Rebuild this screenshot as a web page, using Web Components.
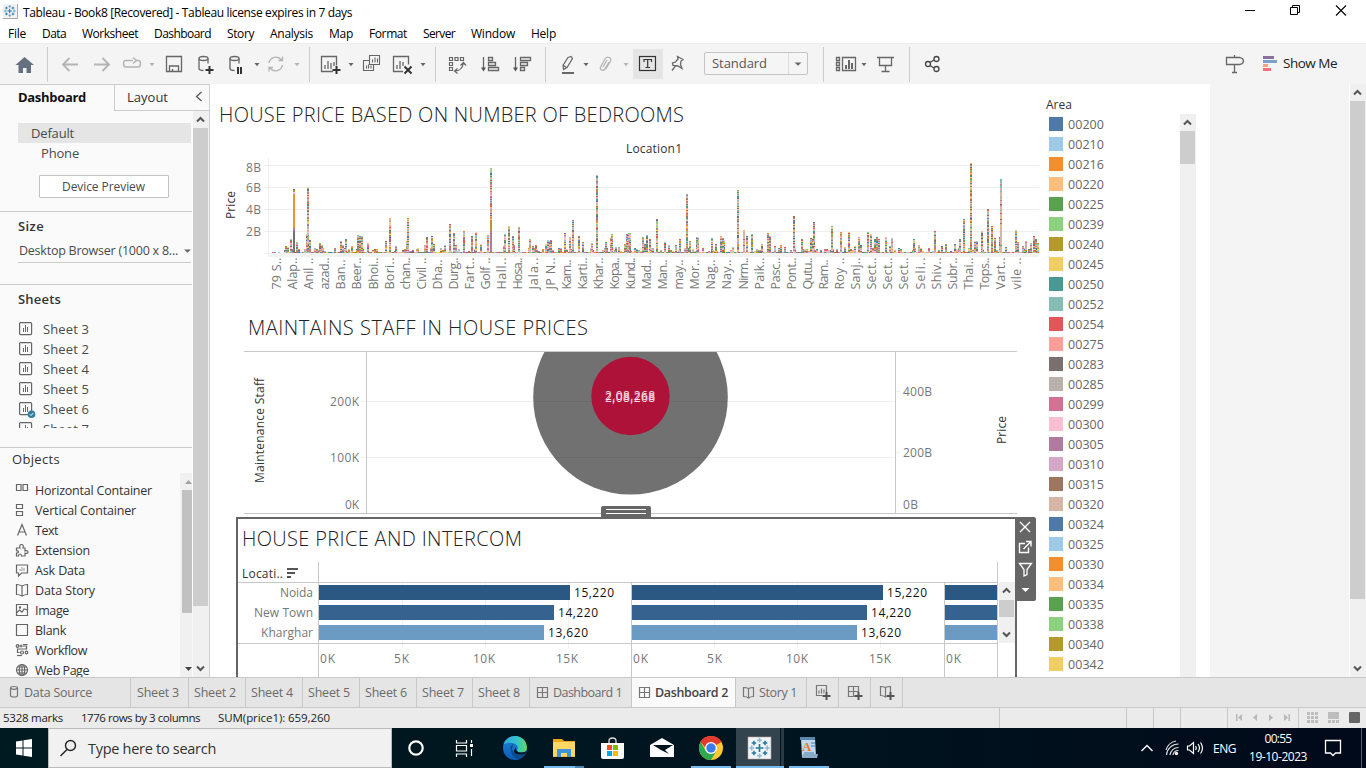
<!DOCTYPE html>
<html lang="en">
<head>
<meta charset="utf-8">
<title>Tableau - Book8</title>
<style>
body{margin:0;width:1366px;height:768px;overflow:hidden;display:flex;flex-direction:column;background:#fff;font-family:"Open Sans","Noto Sans",sans-serif;font-size:12px;color:#333}
</style>
</head>
<body>
<title-bar></title-bar>
<menu-bar></menu-bar>
<tool-bar></tool-bar>
<work-area></work-area>
<sheet-tabs></sheet-tabs>
<status-bar></status-bar>
<task-bar></task-bar>
<script>
const PALETTE=['#4e79a7','#a0cbe8','#f28e2b','#ffbe7d','#59a14f','#8cd17d','#b6992d','#f1ce63','#499894','#86bcb6','#e15759','#ff9d9a','#79706e','#bab0ac','#d37295','#fabfd2','#b07aa1','#d4a6c8','#9d7660','#d7b5a6'];
const define=(name,css,html,after)=>customElements.define(name,class extends HTMLElement{
  connectedCallback(){
    if(this.shadowRoot)return;
    const root=this.attachShadow({mode:'open'});
    root.innerHTML='<style>*,:host{box-sizing:border-box}'+css+'</style>'+(typeof html==='function'?html(this):html);
    if(after)after(this,root);
  }
});

/* Text run whose tracking is tuned to fill a given width. */
const pen=document.createElement('canvas').getContext('2d');
define('fit-text',':host{display:inline-block;white-space:pre;flex:none}','<slot></slot>',el=>{
  const w=+el.getAttribute('w'),s=getComputedStyle(el);
  if(!w)return;
  pen.font=`${s.fontWeight} ${s.fontSize} ${s.fontFamily}`;
  const t=el.textContent;
  el.style.letterSpacing=((w-pen.measureText(t).width)/t.length).toFixed(3)+'px';
  el.style.width=w+'px';
});
const fit=(t,w,c='')=>`<fit-text w="${w}" class="${c}">${t}</fit-text>`;

/* svg whose user space starts at x,y */
const box=(x,y,w,h,body,extra='')=>`<svg width="${w}" height="${h}" viewBox="${x} ${y} ${w} ${h}" ${extra}>${body}</svg>`;

/* Places items left to right; each item is [left, width, markup]. */
const track=(start,items)=>{let at=start;return items.map(([x,w,m])=>{const g=x-at;at=x+w;return `<span style="margin-left:${g}px;width:${w}px">${m}</span>`}).join('')};
const TRACKCSS='span{display:flex;flex:none;align-items:center;white-space:nowrap;height:100%}svg{display:block;flex:none}';

const snow=(x,y,k=1,c='#1c6f9e',d='#5fa3c7')=>{
  const plus=(a,b,r,w,col)=>`<path d="M${a-r} ${b}H${a+r}M${a} ${b-r}V${b+r}" stroke="${col}" stroke-width="${w}"/>`;
  return `<g transform="translate(${x} ${y}) scale(${k})" fill="none">`+plus(0,0,2.6,1.1,c)+plus(0,-5.2,1.6,1,d)+plus(0,5.2,1.6,1,d)+plus(-5.2,0,1.6,1,d)+plus(5.2,0,1.6,1,d)+plus(-3.7,-3.4,1.5,1,c)+plus(3.7,-3.4,1.5,1,c)+plus(-3.7,3.4,1.5,1,c)+plus(3.7,3.4,1.5,1,c)+'</g>';
};

define('title-bar',':host{display:flex;height:24px;flex:none;color:#000;background:#fff}'+TRACKCSS,
 track(0,[
  [3,15,box(3,0,15,24,'<rect x="3" y="4" width="14" height="14" fill="#f2f2f2"/><path d="M3 18.5H17.5V4" stroke="#aaa" fill="none"/>'+snow(9.7,11,.88))],
  [23,330,fit('Tableau - Book8 [Recovered] - Tableau license expires in 7 days',329)],
  [1244,14,box(1244,0,14,24,'<path d="M1245 10.5h10" stroke="#000"/>')],
  [1288,14,box(1288,0,14,24,'<path d="M1290.5 7.500h7v7h-7zM1292.500 7.500v-2h7v7h-2" fill="none" stroke="#000"/>')],
  [1334,14,box(1334,0,14,24,'<path d="M1336 5.500l10 10m0-10l-10 10" fill="none" stroke="#000" stroke-width="1.100"/>')]
 ]));

define('menu-bar',':host{display:flex;height:19px;flex:none;color:#000;background:#fff}'+TRACKCSS,
 track(0,[['File',8,18],['Data',42,24],['Worksheet',82,56],['Dashboard',154,57],['Story',227,27],['Analysis',270,43],['Map',329,24],['Format',369,38],['Server',423,32],['Window',471,44],['Help',531,25]].map(([t,x,w])=>[x,w,fit(t,w)])));

const caret=(x,y=64,c='#666',r=2.500)=>`<path d="M${x-r} ${y-1.500}h${r*2}l-${r} 3.200z" fill="${c}"/>`;
const G='#666',L='#b4b4b4';
const ic=(x,w,body,c=G)=>[x,w,box(x,43,w,41,`<g fill="none" stroke="${c}" stroke-width="1.300">${body}</g>`)];
const sep=x=>ic(x,1,`<path d="M${x+.5} 47V82" stroke="#ccc"/>`);
const car=(x,c)=>ic(x-4,8,`<g stroke="none">${caret(x,64.500,c)}</g>`);
define('tool-bar',':host{display:flex;height:41px;flex:none;background:#f4f4f4;box-shadow:inset 0 1px #eee}fit-text.std{font-size:13px;color:#555}.sel{display:flex;align-items:center;width:104px;height:23px;border:1px solid #c4c4c4;border-radius:2px;padding-left:7px;background:#f5f5f5;margin-top:-1px}.sel i{width:19px;height:21px;border-left:1px solid #ddd;margin-left:auto;display:flex}.show{font-size:13.500px;color:#222;margin-top:-1px}.t{width:30px;height:30px;background:#e5e5e5;display:flex}'+TRACKCSS,
 track(0,[
  ic(14,21,'<path d="M24.500 57l-9 8h3v8h4.500v-5h3.500v5h4.500v-8h3z" fill="#637080" stroke="none"/>'),
  sep(47),
  ic(61,18,'<path d="M78 64.500H63M69.500 58l-6.500 6.500 6.500 6.500" stroke-width="1.800"/>',L),
  ic(93,18,'<path d="M94 64.500h15M102.500 58l6.500 6.500-6.500 6.500" stroke-width="1.800"/>',L),
  ic(122,21,'<path d="M133 60.500h-7q-2.500 0-2.500 3.200t2.500 3.200h12q2.500 0 2.500-3.200t-2.500-3.200h-3M133 57.500l3.500 3-3.500 3" stroke-width="1.500"/>',L),
  car(152,L),
  ic(165,18,'<path d="M166.500 56.500h15v15h-15zM169.500 71v-5h9v5M172.500 71v-2"/>'),
  ic(197,21,'<ellipse cx="203.500" cy="58.500" rx="4.500" ry="2"/><path d="M199 58.500v10q0 2 4.500 2M208 58.500v5"/><path d="M209.500 66v8M205.500 70h8" stroke="#333" stroke-width="2"/>'),
  ic(228,17,'<ellipse cx="234.500" cy="58.500" rx="4.500" ry="2"/><path d="M230 58.500v10q0 2 4.500 2M239 58.500v5"/><path d="M238 67v7M241 67v7" stroke="#333" stroke-width="2"/>'),
  car(257),
  ic(266,20,'<path d="M269 63a7 7 0 0 1 12.500-3M282.500 65a7 7 0 0 1-12.500 3M278.500 60.500h4v-4M273 67.500h-4v4" stroke-width="1.400"/>',L),
  car(297,L),sep(309),
  ic(320,21,'<path d="M333 71.500h-11.500v-15h15v9M325 69v-4M328 69v-8M331 69v-6M334 66v-4"/><path d="M336.500 66v8M332.500 70h8" stroke="#333" stroke-width="2"/>'),
  car(351),
  ic(362,19,'<path d="M369.500 55.500h10v9h-10zM369 60.500h-5.500v10h10v-6M372.500 62.500v-3M375 62.500v-5M377.500 62.500v-4M366.500 68.500v-3M368.500 68.500v-4M371 68.500v-3" stroke-width="1.100"/>'),
  ic(392,21,'<path d="M403 71.500h-9.500v-15h15v8M397 69v-4M400 69v-8M403 66v-4"/><path d="M404.500 66.500l7 7m0-7l-7 7" stroke="#333" stroke-width="2"/>'),
  car(423),sep(435),
  ic(448,20,'<path d="M449.500 57.500h3v3h-3zM455 57.500h3v3h-3zM460.500 57.500h3v3h-3zM449.500 62.500h3v3h-3zM449.500 67.500h3v3h-3zM455 71q7 0 8.500-8M460.500 65.500l3-3 2.500 3M457.500 68.500l-3 2.500 3 2.500" stroke-width="1.200"/>'),
  ic(480,20,'<path d="M483.500 57v12M488.500 57.500h4v3h-4zM488.500 62.500h7v3h-7zM488.500 67.500h10v3h-10z"/><path d="M481 67.500h5l-2.500 4z" fill="#555" stroke="none"/>'),
  ic(512,20,'<path d="M515.500 57v12M520.500 57.500h10v3h-10zM520.500 62.500h7v3h-7zM520.500 67.500h4v3h-4z"/><path d="M513 67.500h5l-2.500 4z" fill="#555" stroke="none"/>'),
  sep(545),
  ic(560,16,'<path d="M568 57.500l3-1 1.500 2-5.500 9-3.500 2-.5-4zM563.500 65.500l3 2" stroke-width="1.200"/><path d="M562 73h12" stroke-width="2"/>'),
  car(586),
  ic(598,15,'<path d="M609 62l-4 7q-1.500 2-3.500 1-2-1.500-.7-3.500l4.500-8q1.500-2.200 4-1 2.500 1.500 1 4l-4.500 7.500M607 60l-4 7" stroke-width="1.300"/>',L),
  car(626,L),
  [633,30,'<div class="t">'+box(633,49,30,30,'<rect x="639.500" y="56.500" width="16" height="14" fill="none" stroke="#333" stroke-width="1.200"/><path d="M644 62v-2.500h7.500v2.500M647.700 60v7.500M645.500 67.500h4.500" fill="none" stroke="#333" stroke-width="1.200"/>')+'</div>'],
  ic(669,17,'<path d="M677.500 56.500l5.500 3-2 1.500-.5 3.500 1.500 4-4-2.500-5-.5-.5-2.500 3-1 2.500-3zM675.500 66l-3.500 4.500" stroke-width="1.300"/>'),
  [704,104,`<div class="sel">${fit('Standard',55,'std')}<i>${box(789,53,18,21,caret(798,64,G,3.500))}</i></div>`],
  sep(823),
  ic(835,23,'<path d="M842.500 57.500h13v13h-13zM836.500 57.500h3v3h-3zM836.500 62.500h3v3h-3zM836.500 67.500h3v3h-3z"/><path d="M846 69v-4M849 69v-9M852 69v-6" stroke-width="2"/>'),
  car(864),
  ic(876,19,'<path d="M877 57.500h17M879.500 58v7.500h12v-7.500M885.500 66v5M881.500 71.500h8"/>'),
  sep(909),
  ic(924,17,'<circle cx="928" cy="64" r="2.500"/><circle cx="936.500" cy="59" r="2.500"/><circle cx="936.500" cy="69" r="2.500"/><path d="M930 62.500l4-2.500M930 65.500l4 2.500"/>','#444'),
  ic(1225,20,'<path d="M1226.500 57.500h13.500q3.500 1 3.500 3.500t-3.500 3.500h-13.500zM1234.500 55v2.500M1234.500 64.500v7.500M1232 72.500h5"/>'),
  [1263,74,box(1263,43,20,41,'<path fill="#8b6f9c" d="M1263 56h11v3h-11z"/><path fill="#7aa0cc" d="M1263 60h14v3h-14z"/><path fill="#f2a57c" d="M1263 64h5v3h-5z"/><path fill="#f3707c" d="M1263 68h8v3h-8z"/>')+fit('Show Me',54,'show')]
 ]));

/* d: 1 points up, -1 points down */
const chev=(x,y,d)=>`<path d="M${x-3.500} ${y+d*2}L${x} ${y-d*1.500}L${x+3.500} ${y+d*2}" fill="none" stroke="#555" stroke-width="2"/>`;
/* vertical scrollbar: y,h = extent, a,b = thumb extent */
const scroll=(x,y,w,h,a,b,up=true,down=true)=>box(x,y,w,h,`<rect x="${x}" y="${y}" width="${w}" height="${h}" fill="#f0f0f0"/><rect x="${x}" y="${a}" width="${w-1}" height="${b-a}" fill="#cdcdcd"/>`+(up?chev(x+w/2-.5,y+8.500,1):'')+(down?chev(x+w/2-.5,y+h-8.500,-1):''),'style="display:block;flex:none"');

const sheetIco=(chk)=>box(19,322,18,16,`<g fill="none" stroke="#666" stroke-width="1.200"><rect x="19.600" y="322.600" width="12" height="12" rx="1"/><path d="M23.500 332v-4M25.500 332v-7M27.500 332v-5" stroke-width="1"/></g>`+(chk?'<circle cx="31.500" cy="334.200" r="3.800" fill="#2e7da1"/><path d="M29.800 334.200l1.300 1.300 2.200-2.500" fill="none" stroke="#fff"/>':''));
const O=(b)=>box(0,0,14,14,`<g fill="none" stroke="#666" stroke-width="1.200">${b}</g>`);
const objects=[
 ['Horizontal Container',117,O('<path d="M1.500 1.500h4.500v6h-4.500zM8 1.500h4.500v6h-4.500z"/>')],
 ['Vertical Container',101,O('<path d="M1.500 1.500h6v4h-6zM1.500 8.500h6v4h-6z"/>')],
 ['Text',23,O('<path d="M2.500 12.500l4.500-11 4.500 11M4 9h6"/>')],
 ['Extension',55,O('<path d="M1.500 5h3.500q-1-3.500 1.500-3.500t1.500 3.500h2v3q3-1 3 1t-3 1.200v2.800h-3.500q0-2-1.500-2t-1.500 2h-2v-3q2 0 2-1.200t-2-1.200z"/>')],
 ['Ask Data',50,O('<path d="M1.500 2h11v8h-6l-3 3v-3h-2z"/><path d="M5 8v-2M7 8v-4M9 8v-3" stroke="#aaa"/>')],
 ['Data Story',60,O('<path d="M7 3q-2.500-1.500-5.500-1.500v10q3 0 5.500 1.500 2.500-1.500 5.500-1.500v-10q-3 0-5.500 1.500zM7 3v10"/>')],
 ['Image',34,O('<path d="M1.500 1.500h11v11h-11zM1.500 10l3-3 2.500 2 2-3 3.500 1"/><circle cx="5" cy="4.500" r=".6"/>')],
 ['Blank',31,O('<path d="M1.500 1.500h11v11h-11z"/>')],
 ['Workflow',52,O('<circle cx="2.500" cy="3" r="1.300"/><path d="M4 3h7.500v3h-9v3.500h2M6 1.500v3M8 1.500h4.500"/><circle cx="7" cy="9.500" r="1.500"/><circle cx="11.500" cy="9.500" r="1.300"/><path d="M2 12.500h5"/>')],
 ['Web Page',54,O('<circle cx="7" cy="7" r="5.500"/><ellipse cx="7" cy="7" rx="2.700" ry="5.500"/><path d="M1.500 7h11M2.500 4h9M2.500 10h9M7 1.500v11"/>')]
];
define('side-panel',`:host{display:flex;flex-direction:column;width:210px;height:593px;background:#fafafa;border-right:1px solid #d0d0d0;border-top:1px solid #ccc;flex:none;color:#4a4a4a}
svg{display:block;flex:none}
.tabs{display:flex;height:26px;flex:none;font-size:13px;line-height:25px}
.tabs b{width:114px;padding-left:18px;color:#111}
.tabs div{flex:1;border-left:1px solid #ccc;border-bottom:1px solid #ccc;display:flex;padding-left:12px;color:#333}
.body{display:flex;flex:1;min-height:0}
.col{width:192px;overflow:hidden;margin-right:1px;flex:none}
.row{height:20px;line-height:20px;font-size:13px}
.def{margin:12px 1px 0 18px;padding-left:13px;background:#e5e5e5}.ph{padding-left:41px}
.btn{margin:12px 0 0 39px;width:130px;height:23px;line-height:21px;border:1px solid #c4c4c4;padding-left:22px;border-radius:1px;background:#fff}
.line{height:1px;background:#ccc}
h4{margin:0;font-size:13px;line-height:20px;font-weight:600;color:#333}
.desk{display:flex;margin:5px 1px 0 18px;height:22px;line-height:20px;border-bottom:1px solid #ccc;padding-left:1px;font-size:12.500px}
.sheets{height:109px;overflow:hidden}
.sheets .row{display:flex;padding:0 0 0 19px}.sheets svg{margin:3px 6px 0 0}
.objs{display:flex;height:204px;overflow:hidden}
.objs>div{width:180px;padding-top:7px;flex:none}.objs .row{display:flex;font-size:12.500px;line-height:21px;color:#333;padding-left:15px}.objs .row svg{margin:3px 6px 0 0}`,
`<div class="tabs"><b>${fit('Dashboard',68)}</b><div>${fit('Layout',41)}${box(180,85,28,25,'<path d="M201.500 92l-5 4.500 5 4.500" stroke="#555" fill="none" stroke-width="1.300"/>','style="margin-left:12px"')}</div></div>
<div class="body"><div class="col">
<div class="row def">${fit('Default',43)}</div><div class="row ph">${fit('Phone',38)}</div>
<div class="btn">${fit('Device Preview',83)}</div>
<div class="line" style="margin-top:13px"></div>
<h4 style="margin:4px 0 0 18px">${fit('Size',26)}</h4>
<div class="desk">${fit('Desktop Browser (1000 x 8...',159)}${box(178,241,14,20,caret(187.500,251,G,3.500))}</div>
<div class="line" style="margin-top:21px"></div>
<h4 style="margin:4px 0 10px 18px">${fit('Sheets',43)}</h4>
<div class="sheets">${[3,2,4,5,6,7].map(n=>`<div class="row">${sheetIco(n===6)}${fit('Sheet '+n,46)}</div>`).join('')}</div>
<div class="line" style="margin-top:19px"></div>
<h4 style="margin:1px 0 4px 12px;font-weight:500">${fit('Objects',48)}</h4>
<div class="objs"><div>${objects.map(([t,w,i])=>`<div class="row">${i}${fit(t,w)}</div>`).join('')}</div>
${box(180,473,12,204,'<rect x="180" y="473" width="12" height="204" fill="#f0f0f0"/><rect x="182" y="490" width="10" height="123" fill="#c1c1c1"/><path d="M185 484h7l-3.500-4z" fill="#a3a3a3"/><path d="M185 667h7l-3.500 4z" fill="#444"/>')}</div>
</div>${scroll(193,111,16,566,128,606)}</div>`);

/* Price per location: [left, top] of the taller stacks */
const stacks=[];
const A=[225,289,231,291,240,267,249,117,258,276,288,252,291,111,297,270,327,279,333,285,390,273,396,285,405,267,423,289,441,255,447,258,453,258,471,279,525,273,537,204,555,288,588,273,591,204,621,294,642,285,648,261,663,258,669,283,702,285,717,222,729,249,735,285,759,243,783,258,795,246,810,282,831,255,840,54,882,252,879,288,894,228,906,258,909,285,924,231,957,267,966,288,975,285,1005,282,1011,270,1017,273,1020,270,1062,249,1077,261,1086,210,1104,258,1116,276,1143,279,1158,75,1185,276,1200,264,1203,252,1215,291,1224,291,1245,282,1251,252,1257,249];
const B=[12,282,18,252,24,249,66,261,72,282,78,255,87,267,108,207,132,276,144,285,165,285,177,267,198,132,207,273,228,261,231,264,273,264,285,282,300,258,306,264,309,270,336,291,351,120,369,240,378,258,393,252,423,282,441,249,447,258,462,288,480,285,492,291,519,198,543,267,570,264,576,264,579,216,633,228,660,246,672,291,684,246,702,288,714,261,720,285,741,246,750,252,762,267,768,261,774,267,795,261,807,288,813,264,840,297,879,267,894,285,942,243,963,288,975,282,1002,282,1017,267,1029,207,1050,39,1062,273,1068,273,1083,243,1101,177,1113,228,1122,264,1137,261,1140,87,1155,291,1185,240,1191,276,1206,288,1215,273,1230,279,1239,258,1245,267,1251,279];
for(let i=0;i<A.length;i+=2)stacks.push([210+A[i]/3,150+A[i+1]/3]);
for(let i=0;i<B.length;i+=2)stacks.push([620+B[i]/3,150+B[i+1]/3]);
let seed=77;const rnd=()=>(seed=(seed*1103515245+12345)%2147483648)/2147483648;
const stackSvg=()=>{
  const paths=PALETTE.map(()=>'');
  const put=(c,x,y,h,w=2)=>paths[c]+=`M${x} ${y}h${w}v${h}h-${w}z`;
  for(let x=270;x<1037;x+=2){
    const h=x<284?(rnd()>.6?1:0):(rnd()>.6?2+Math.floor(rnd()*4):1);
    for(let y=0;y<h;y++)put(Math.floor(rnd()*20),x,252-y,1);
  }
  for(const [a,b] of stacks){
    const x=Math.round(a),t=Math.round(b);
    if(t===189){put(12,x,231,22);put(16,x,228,3);put(2,x,194,34);put(15,x,192,2);put(6,x,190,2);put(12,x,189,1);continue}
    const solid=x===743?19:x===1000?19:-1;
    for(let y=252;y>=t;y--){
      let c=Math.floor(rnd()*20);
      if(solid>=0&&rnd()<.8)c=(y<200&&rnd()<.5)?9:solid;
      if(x===490&&y>219)c=y>230?16:6;
      put(c,x,y,1);
    }
  }
  return paths.map((d,i)=>`<path d="${d}" fill="${PALETTE[i]}" shape-rendering="crispEdges"/>`).join('');
};
const tx=(t,x,y,w,o='')=>`<text x="${x}" y="${y}" textLength="${w}" ${o}>${t}</text>`;
const vt=(t,x,y,w,o='')=>`<text transform="translate(${x} ${y}) rotate(-90)" ${w?`textLength="${w}"`:''} ${o}>${t}</text>`;
const locs='79 S,Alap,Anil ,azad,Ban,Beer,Bhoi,Bori,chan,Civil ,Dha,Durg,Fart,Golf ,Hall,Hosa,Jala,JP N,Kam,Karti,Khar,Kopa,Kund,Mad,Man,may,Mor,Nag,Nay,Nirm,Paik,Pasc,Pont,Qutu,Ram,Roy ,Sanj,Sect,Sect,Sect,Seli,Shiv,Subr,Thai,Tops,Vart,vile '.split(',');
const CH='svg{display:block}text{font-size:12px;fill:#777}.h{font-size:20px;fill:#222;font-weight:300}.k{fill:#333;font-weight:500}.r{font-size:12.500px}';
define('price-chart',':host{display:block;height:222px}'+CH,()=>box(210,84,830,222,
 tx('HOUSE PRICE BASED ON NUMBER OF BEDROOMS',219,121.5,465,'class="h"')+tx('Location1',626,153,56,'class="k"')+
 [[8,165,172],[6,187,192],[4,209,214],[2,231,236]].map(([n,y,b])=>`<path d="M264 ${y+.5}H1039" stroke="#eee"/>`+tx(n+'B',246,b,15)).join('')+
 '<path d="M268.500 158V256M264 253.500h4" stroke="#eee"/><path d="M268 253h771v4H268z" fill="#f3f3f3"/>'+stackSvg()+
 vt('Price',235,219,28,'class="k"')+
 locs.map((t,i)=>vt(t+'..',(281+i*16.087).toFixed(1),289.500,t.length<4?30:32,'class="r"')).join('')));

define('staff-chart',':host{display:block;height:211px}'+CH+'.w{fill:#f4dbe2}',
 box(210,306,830,211,
 tx('MAINTAINS STAFF IN HOUSE PRICES',248,334.5,340,'class="h"')+
 '<path d="M361 401.500H895M361 457.500H895" stroke="#efefef"/><path d="M895 391.500h5M895 452.500h5" stroke="#eee"/>'+
 '<clipPath id="c"><rect x="367" y="352" width="528" height="161"/></clipPath><g clip-path="url(#c)"><circle cx="630.500" cy="397.300" r="97.300" fill="#717171"/><path d="M534 401.500H727M555 457.500H706" stroke="#6a6a6a"/></g><circle cx="630.500" cy="396" r="39.200" fill="#ae1239"/>'+
 '<path d="M244 351.500H1017M244 513.500H1017M366.500 352V513M895.500 352V513" stroke="#c8c8c8"/>'+
 tx('2,08,268',605,400,50,'class="w"')+tx('2,08,268',605,402,50,'class="w"')+
 tx('200K',330,406,29)+tx('100K',330,462,29)+tx('0K',345,509,14)+tx('400B',903,396,29)+tx('200B',903,457,29)+tx('0B',903,509,15)+
 vt('Maintenance Staff',264,483,105,'class="k"')+vt('Price',1006,444,28,'class="k"')));

const bars=[['Noida',280,33,251,'15,220','#2b5783'],['New Town',254,59,235,'14,220','#36628f'],['Kharghar',261,52,225,'13,620','#6b9bc3']];
define('intercom-chart',`:host{display:block;position:relative;height:160px;margin-left:26px;width:781px;border:2px solid #666;border-bottom:0}
.grip{position:absolute;left:363px;top:-13px}.strip{position:absolute;left:777px;top:-2px}.sc{position:absolute;left:761px;top:63px}`+CH+'.v{fill:#111}',
 box(238,519,777,158,
 tx('HOUSE PRICE AND INTERCOM',242,545.5,280,'class="h"')+tx('Locati..',242,578,41,'class="k"')+
 '<path d="M287 569h11M287 573h8M287 577h4" stroke="#555" stroke-width="2"/>'+
 [402,485,568,714,797,880].map(x=>`<path d="M${x+.5} 583V648" stroke="#f0f0f0"/>`).join('')+
 bars.map(([n,x,w,l,v,c],i)=>{const y=585+20*i;return tx(n,x,y+12,w)+[319,632].map(s=>`<rect x="${s}" y="${y}" width="${l}" height="15" fill="${c}"/>`+tx(v,s+l+4,y+12,40,'class="v"')).join('')+`<rect x="945" y="${y}" width="52" height="15" fill="${c}"/>`}).join('')+
 '<path d="M238 582.500H997M238 643.500H997M318.500 562V677M631.500 583V677M944.500 583V677M997.500 562V677" stroke="#c8c8c8"/>'+
 [319,632].map(s=>tx('0K',s+1,663,15)+tx('5K',s+75,663,15)+tx('10K',s+154,663,22)+tx('15K',s+237,663,22)).join('')+tx('0K',946,663,15))+
 '<div class="sc">'+scroll(999,582,16,61,600,617)+'</div>'+
 '<div class="grip">'+box(601,506,50,12,'<path d="M601 518v-10q0-2 2-2h46q2 0 2 2v10z" fill="#666"/><path d="M606 509.500h40M606 513.500h40" stroke="#fff"/>')+'</div>'+
 '<div class="strip">'+box(1015,517,21,84,'<path d="M1015 517h19q2 0 2 2v80q0 2-2 2h-19z" fill="#666"/><g fill="none" stroke="#fff" stroke-width="1.400"><path d="M1020 522l10 10m0-10l-10 10"/><path d="M1025 543.500h-5.500v9h9v-5M1023.500 549l7-7M1026 541.500h5v5"/><path d="M1019.500 563.500h12l-4.500 6v5l-3 1.500v-6.500z" stroke-width="1.300"/></g><path d="M1021.500 588h8l-4 4z" fill="#fff"/>')+'</div>');

const areas='00200 00210 00216 00220 00225 00239 00240 00245 00250 00252 00254 00275 00283 00285 00299 00300 00305 00310 00315 00320 00324 00325 00330 00334 00335 00338 00340 00342'.split(' ');
define('area-legend',`:host{display:flex;width:170px;height:593px;flex:none;overflow:hidden}
.l{width:140px;padding:11px 0 0 6px;flex:none}b{display:block;font-weight:500;line-height:20px;height:19px}
p{margin:0;height:20px;display:flex;align-items:center;padding-left:3px;font-size:12.500px;color:#666}i{width:14px;height:14px;margin-right:5px}.s{padding-top:30px}`,
 `<div class="l"><b>${fit('Area',26)}</b>${areas.map((a,i)=>`<p><i style="background:${PALETTE[i%20]}"></i>${fit(a,36)}</p>`).join('')}</div><div class="s">${scroll(1180,114,16,563,131,164,true,false)}</div>`);

define('work-area',`:host{display:flex;height:593px;flex:none;background:#f4f4f4}.page{display:flex;background:#fff;width:1000px;flex:none}.charts{width:830px;height:593px;display:flex;flex-direction:column;flex:none}.gap{flex:1;border-right:1px solid #fff}`,
 `<side-panel></side-panel><div class="page"><div class="charts"><price-chart></price-chart><staff-chart></staff-chart><intercom-chart></intercom-chart></div><area-legend></area-legend></div><div class="gap"></div>${scroll(1350,84,16,593,101,599)}`);

const dashI='<path d="M1.500 2.500h10v10h-10zM6.500 2.500v10M1.500 7.500h10"/>',storyI='<path d="M6.500 3.500q-2-1-5-1v9q3 0 5 1.500 2-1.500 5-1.500v-9q-3 0-5 1zM6.500 3.500v9.500"/>',sheetI='<path d="M1.500 1.500h10v10h-10zM4 9.500v-3M6.500 9.500v-5M9 9.500v-4"/>';
const T=(b,w=14)=>`<svg width="${w}" height="15" viewBox="0 0 ${w} 15" fill="none" stroke="#777" stroke-width="1.200">${b}</svg>`;
const N=b=>`<svg width="16" height="17" viewBox="0 0 16 17" fill="none" stroke="#777" stroke-width="1.200">${b}<path d="M7.500 12h8M11.500 8v8" stroke="#e5e5e5" stroke-width="4"/><path d="M7.500 12h8M11.500 8v8" stroke="#555" stroke-width="2"/></svg>`;
const tabs=[[131,9,T('<path d="M1.500 3q0-1.500 3.500-1.500T8.500 3v7.500Q8.500 12 5 12t-3.500-1.500zM1.500 3.200Q5 5.500 8.500 3.200"/>',12),'Data Source',68],[58,6,'','Sheet 3',42],[57,5,'','Sheet 2',42],[57,5,'','Sheet 4',42],[57,5,'','Sheet 5',42],[57,5,'','Sheet 6',42],[56,5,'','Sheet 7',42],[57,5,'','Sheet 8',42],[102,6,T(dashI),'Dashboard 1',69],[104,6,T(dashI),'Dashboard 2',73,'on'],[71,6,T(storyI),'Story 1',38],[32,8,N(sheetI)],[32,8,N(dashI)],[32,8,N(storyI)]];
define('sheet-tabs',`:host{display:flex;height:31px;flex:none;background:#e5e5e5;border-top:1px solid #c8c8c8;border-bottom:1px solid #c8c8c8;color:#6b6b6b;font-size:12.500px}
div{display:flex;align-items:center;border-right:1px solid #c8c8c8;flex:none}.on{background:#fafafa;color:#444;font-weight:600}svg{display:block;margin-right:3px;flex:none}`,
 tabs.map(([w,p,i,t,tw,c])=>`<div class="${c||''}" style="width:${w}px;padding-left:${p}px">${i}${t?fit(t,tw):''}</div>`).join(''));

const sl=x=>[x,1,box(x,708,1,20,`<path d="M${x+.5} 708v20" stroke="#c8c8c8"/>`)];
define('status-bar',':host{display:flex;height:20px;flex:none;background:#ebebeb;color:#222;font-size:11.500px}fit-text{margin-top:-2px}'+TRACKCSS,
 track(0,[[3,60,fit('5328 marks',60)],[81,119,fit('1776 rows by 3 columns',119)],[218,112,fit('SUM(price1): 659,260',112)],sl(999),sl(1126),sl(1153),sl(1180),sl(1227),
 [1234,60,box(1234,708,60,20,'<path d="M1236 714h1.500v7h-1.500zM1242 714v7l-4-3.500zM1257 714v7l-4-3.500zM1269 714v7l4-3.500zM1284 714v7l4-3.500zM1288.500 714h1.500v7h-1.500z" fill="#b8b8b8"/>')],
 sl(1298),
 [1306,56,box(1306,708,56,20,'<g fill="#bdbdbd">'+[0,1,2].map(r=>[0,1,2].map(c=>`<rect x="${1307+c*4}" y="${712+r*4}" width="3" height="3"/>`).join('')).join('')+'<path d="M1328 712h11v7h-11zM1328 720h3v3h-3zM1332 720h3v3h-3zM1336 720h3v3h-3z"/></g><rect x="1349" y="712" width="11" height="11" rx="1" fill="#666"/>')]
 ]));

const tb=(x,w,b)=>[x,w,box(x,728,w,40,b)];
define('task-bar',`:host{display:flex;height:40px;flex:none;background:linear-gradient(90deg,#001a21,#00141f 60%,#01091a);color:#fff}.search{display:flex;align-items:center;width:344px;height:40px;background:#f1f1f1;border:1px solid #bbb;color:#333;font-size:14.500px}.clock{display:flex;flex-direction:column;align-items:center;width:60px;line-height:18px;height:37px}`+TRACKCSS,
 track(0,[
 tb(12,24,'<path d="M16 741.500l6.500-1v7h-6.500zM23.500 740.300l8.500-1.300v8.500h-8.500zM16 748.500h6.500v7l-6.500-1zM23.500 748.500h8.500v8.500l-8.500-1.300z" fill="#fff"/>'),
 [48,344,'<div class="search">'+box(49,728,39,40,'<circle cx="70.500" cy="745.500" r="5" fill="none" stroke="#222" stroke-width="1.400"/><path d="M67 749.500l-6.500 6.500" stroke="#222" stroke-width="1.400"/>')+fit('Type here to search',128)+'</div>'],
 tb(404,24,'<circle cx="416" cy="748" r="6.700" fill="none" stroke="#fff" stroke-width="2.200"/>'),
 tb(453,22,'<path d="M456.500 740v3h10v-3M456.500 757v-3h10v3M456.500 745.500h10v5.500h-10zM471.500 740v3M471.500 749v7" fill="none" stroke="#fff" stroke-width="1.200"/><path d="M470 744h3v3h-3z" fill="#fff"/>'),
 tb(502,26,'<defs><linearGradient id="e" x1="0" x2="1"><stop offset="0" stop-color="#2fa8e0"/><stop offset=".6" stop-color="#35c4c9"/><stop offset="1" stop-color="#62d957"/></linearGradient><linearGradient id="f" x1="0" y1="0" x2="0" y2="1"><stop offset="0" stop-color="#1a86d8"/><stop offset="1" stop-color="#0d5bb8"/></linearGradient></defs><circle cx="515" cy="748" r="12" fill="url(#f)"/><path d="M503.500 744.500a12 12 0 0 1 23.500 3q0 5-6 5-4 0-4-2.500 2-3-1-5.500-5-3.500-12.500 0z" fill="url(#e)"/><path d="M510.500 748q0-3 3-4-3 5 0 8.500 4 3.500 11 1.500l1-1q-2 4-6 6-9-1-9-11z" fill="#0c4a8c"/><path d="M516 747.500q-.500 5 5 5t5.700-2.500l-1.500 4q-10 2-11.500-3z" fill="#00141f"/>'),
 tb(544,40,'<path d="M553 739h9l2 2h11v16h-22z" fill="#e8a91e"/><path d="M553 742h22v14.500h-22z" fill="#fcd765"/><path d="M557 749h14v8h-4v-4h-6v4h-4z" fill="#3f93d8"/><path d="M544 766h31v2h-31z" fill="#76b9ed"/><path d="M575 766h9v2h-9z" fill="#4b85b3"/>'),
 tb(600,26,'<path d="M609 744v-3q0-3 3.500-3t3.500 3v3" fill="none" stroke="#ddd" stroke-width="1.300"/><path d="M601 743h23v14q0 2-2 2h-19q-2 0-2-2z" fill="#fff"/><path d="M607 745h5v5h-5z" fill="#f25022"/><path d="M613 745h5v5h-5z" fill="#7fba00"/><path d="M607 751h5v5h-5z" fill="#00a4ef"/><path d="M613 751h5v5h-5z" fill="#ffb900"/>'),
 tb(649,26,'<path d="M650 745l12-7 12 7v12h-24z" fill="#fff"/><path d="M653 745h20l-8 5 4 4-8-4z" fill="#00141f"/>'),
 tb(691,40,'<circle cx="711" cy="748" r="12" fill="#fcc934"/><path d="M711 748L700.600 742A12 12 0 0 1 721.400 742z" fill="#e33b2e"/><path d="M711 742h10.400A12 12 0 0 0 700.600 742l5 6z" fill="#e33b2e"/><path d="M700.600 742A12 12 0 0 0 711 760l5.200-9-10.400 0z" fill="#2da94f"/><circle cx="711" cy="748" r="6" fill="#fff"/><circle cx="711" cy="748" r="4.700" fill="#3b7ded"/><path d="M691 766h40v2h-40z" fill="#76b9ed"/>'),
 tb(736,48,'<path d="M736 728h44v38h-44z" fill="#33444e"/><path d="M781 728h3v38h-3z" fill="#2b3a44"/><rect x="748" y="737" width="23" height="22" fill="#f1f3f4" stroke="#b9a9a0" stroke-width=".6"/>'+snow(759.500,748,1.500,'#2678a2','#8cbbd3')+'<path d="M736 766h48v2h-48z" fill="#76b9ed"/>'),
 tb(789,40,'<path d="M801 738h14l1 19h-14z" fill="#bcd9ef"/><path d="M800 737h15v3h-15z" fill="#5b87ad"/><path d="M803 754h15l-1 4h-15z" fill="#8aa9c4"/><text x="802" y="751" font-family="Liberation Serif" font-weight="700" font-size="13" fill="#ee7726">A</text><path d="M811 743h4M811 746h4M804 753h10" stroke="#4a7fae"/><path d="M789 766h40v2h-40z" fill="#76b9ed"/>'),
 tb(1139,16,'<path d="M1141.500 751l5.500-5.500 5.500 5.500" fill="none" stroke="#fff" stroke-width="1.400"/>'),
 tb(1164,16,'<g fill="none" stroke="#ddd" stroke-width="1.200"><path d="M1166.500 755a12 12 0 0 1 12-11M1170 755a8.500 8.500 0 0 1 8.500-7.500M1173 755a5.500 5.500 0 0 1 5.500-4.500M1166 750a13 13 0 0 1 10-9"/></g><circle cx="1176.500" cy="753.500" r="1.700" fill="#fff"/>'),
 tb(1186,18,'<g fill="none" stroke="#fff" stroke-width="1.200"><path d="M1187.500 746h2l4-3.500v11l-4-3.500h-2zM1195.500 746q1.500 2 0 4M1198 744q3 4 0 8M1200.500 742.500q4 5.500 0 11"/></g>'),
 [1213,23,fit('ENG',23)],
 [1248,60,`<div class="clock">${fit('00:55',27)}${fit('19-10-2023',58)}</div>`],
 tb(1323,20,'<path d="M1325.500 740.500h15v12.500h-5l-2.500 2.500-2.500-2.500h-5z" fill="none" stroke="#fff" stroke-width="1.300"/>'),
 tb(1361,1,'<path d="M1361.500 728v40" stroke="#59606b"/>')
 ]));
</script>
</body>
</html>
